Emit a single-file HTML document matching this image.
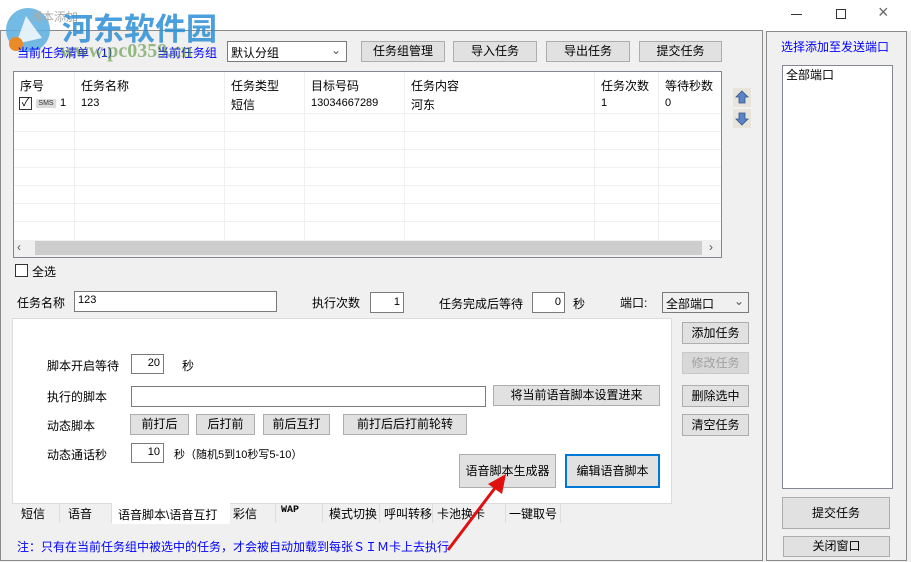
<!DOCTYPE html>
<html><head><meta charset="utf-8"><style>
*{box-sizing:border-box;margin:0;padding:0}
body{width:911px;height:562px;background:#f0f0f0;position:relative;overflow:hidden;font-family:"Liberation Sans","Noto Sans CJK SC",sans-serif;font-size:12px;color:#000}
.a{position:absolute;white-space:nowrap}
.btn{position:absolute;background:#e1e1e1;border:1px solid #adadad;text-align:center;font-size:12px}
.inp{position:absolute;background:#fff;border:1px solid #7a7a7a;font-size:11px;padding:0 3px}
.r{text-align:right}
.hl{position:absolute;height:1px;background:#f0f0f0}
.vl{position:absolute;width:1px;background:#f0f0f0}
.tab{position:absolute;top:504px;height:19px;border-right:1px solid #ddd;padding:1px 6px;white-space:nowrap}
</style></head><body>
<div class="a" style="left:0;top:0;width:911px;height:31px;background:#fff"></div>
<div class="a" style="left:0;top:30px;width:763px;height:531px;border:1px solid #8a8a8a"></div>
<div class="a" style="left:766px;top:31px;width:141px;height:530px;border:1px solid #8a8a8a"></div>
<div class="a" style="left:791px;top:14px;width:11px;height:1px;background:#333"></div>
<div class="a" style="left:836px;top:9px;width:10px;height:10px;border:1px solid #333"></div>
<div class="a" style="left:878px;top:2px;font-size:18px;color:#666">×</div>
<svg class="a" style="left:2px;top:4px" width="56" height="52"><circle cx="26" cy="26" r="22" fill="#5aaee0" opacity=".85"/><path d="M14 40 L24 12 L40 34 Z" fill="#fff" opacity=".8"/><circle cx="14" cy="40" r="7" fill="#e98b2a"/></svg>
<div class="a" style="left:30px;top:8px;color:#aaa;font-size:12px">脚本添加</div>
<div class="a" style="left:62px;top:4px;font-size:31px;font-weight:bold;color:#2c8fd6;opacity:.85">河东软件园</div>
<div class="a" style="left:17px;top:44px;color:#0000ff">当前任务清单（1）</div>
<div class="a" style="left:157px;top:44px;color:#0000ff">当前任务组</div>
<div class="a" style="left:60px;top:40px;color:#4a8a2a;opacity:.55;font-size:20px;font-weight:bold;font-family:'Liberation Serif',serif">www.pc0359.cn</div>
<div class="inp" style="left:227px;top:41px;width:120px;height:21px;font-size:12px;padding-top:2px">默认分组<span style="position:absolute;right:5px;top:1px;color:#555">⌄</span></div>
<div class="btn" style="left:361px;top:41px;width:84px;height:21px;line-height:19px">任务组管理</div>
<div class="btn" style="left:453px;top:41px;width:84px;height:21px;line-height:19px">导入任务</div>
<div class="btn" style="left:546px;top:41px;width:84px;height:21px;line-height:19px">导出任务</div>
<div class="btn" style="left:639px;top:41px;width:83px;height:21px;line-height:19px">提交任务</div>
<div class="a" style="left:13px;top:71px;width:709px;height:187px;background:#fff;border:1px solid #828790"></div>
<div class="vl" style="left:74px;top:72px;height:168px"></div>
<div class="vl" style="left:224px;top:72px;height:168px"></div>
<div class="vl" style="left:304px;top:72px;height:168px"></div>
<div class="vl" style="left:404px;top:72px;height:168px"></div>
<div class="vl" style="left:594px;top:72px;height:168px"></div>
<div class="vl" style="left:658px;top:72px;height:168px"></div>
<div class="hl" style="left:14px;top:113px;width:707px"></div>
<div class="hl" style="left:14px;top:131px;width:707px"></div>
<div class="hl" style="left:14px;top:149px;width:707px"></div>
<div class="hl" style="left:14px;top:167px;width:707px"></div>
<div class="hl" style="left:14px;top:185px;width:707px"></div>
<div class="hl" style="left:14px;top:203px;width:707px"></div>
<div class="hl" style="left:14px;top:221px;width:707px"></div>
<div class="a" style="left:20px;top:77px">序号</div>
<div class="a" style="left:81px;top:77px">任务名称</div>
<div class="a" style="left:231px;top:77px">任务类型</div>
<div class="a" style="left:311px;top:77px">目标号码</div>
<div class="a" style="left:411px;top:77px">任务内容</div>
<div class="a" style="left:601px;top:77px">任务次数</div>
<div class="a" style="left:665px;top:77px">等待秒数</div>
<div class="a" style="left:19px;top:97px;width:13px;height:13px;border:1px solid #333;font-size:11px;line-height:11px;text-align:center">✓</div>
<div class="a" style="left:36px;top:99px;width:20px;height:9px;background:#ddd;font-size:7px;line-height:9px;text-align:center;color:#333">SMS</div>
<div class="a" style="left:60px;top:97px;font-size:11px">1</div>
<div class="a" style="left:81px;top:97px;font-size:11px">123</div>
<div class="a" style="left:231px;top:96px">短信</div>
<div class="a" style="left:311px;top:97px;font-size:11px">13034667289</div>
<div class="a" style="left:411px;top:96px">河东</div>
<div class="a" style="left:601px;top:97px;font-size:11px">1</div>
<div class="a" style="left:665px;top:97px;font-size:11px">0</div>
<div class="a" style="left:14px;top:240px;width:707px;height:17px;background:#f0f0f0"></div>
<div class="a" style="left:35px;top:241px;width:667px;height:14px;background:#cdcdcd"></div>
<div class="a" style="left:17px;top:240px;color:#555">‹</div>
<div class="a" style="left:709px;top:240px;color:#555">›</div>
<div class="a" style="left:733px;top:88px;width:18px;height:19px;background:#e8e4dc"></div>
<div class="a" style="left:733px;top:109px;width:18px;height:19px;background:#e8e4dc"></div>
<svg class="a" style="left:733px;top:88px" width="18" height="40"><path d="M9 3 L15 9 L12 9 L12 15 L6 15 L6 9 L3 9 Z" fill="#5b84c4" stroke="#34558a" stroke-width=".8"/><path d="M9 37 L15 31 L12 31 L12 25 L6 25 L6 31 L3 31 Z" fill="#5b84c4" stroke="#34558a" stroke-width=".8"/></svg>
<div class="a" style="left:15px;top:264px;width:13px;height:13px;border:1px solid #333;background:#fff"></div>
<div class="a" style="left:32px;top:263px">全选</div>
<div class="a" style="left:17px;top:294px">任务名称</div>
<div class="inp" style="left:74px;top:291px;width:203px;height:21px;padding-top:2px">123</div>
<div class="a" style="left:312px;top:294px">执行次数</div>
<div class="inp r" style="left:370px;top:292px;width:34px;height:21px;padding-top:3px">1</div>
<div class="a" style="left:439px;top:295px">任务完成后等待</div>
<div class="inp r" style="left:532px;top:292px;width:33px;height:21px;padding-top:3px">0</div>
<div class="a" style="left:573px;top:295px">秒</div>
<div class="a" style="left:620px;top:294px">端口:</div>
<div class="inp" style="left:662px;top:292px;width:87px;height:21px;font-size:12px;background:#f0f0f0;padding-top:2px">全部端口<span style="position:absolute;right:4px;top:1px;color:#555">⌄</span></div>
<div class="a" style="left:12px;top:318px;width:660px;height:186px;background:#fff;border:1px solid #dcdcdc"></div>
<div class="btn" style="left:682px;top:322px;width:67px;height:22px;line-height:20px">添加任务</div>
<div class="btn" style="left:682px;top:352px;width:67px;height:22px;line-height:20px;color:#a0a0a0;background:#d8d8d8;border-color:#c8c8c8">修改任务</div>
<div class="btn" style="left:682px;top:385px;width:67px;height:22px;line-height:20px">删除选中</div>
<div class="btn" style="left:682px;top:414px;width:67px;height:22px;line-height:20px">清空任务</div>
<div class="a" style="left:47px;top:357px">脚本开启等待</div>
<div class="inp r" style="left:131px;top:354px;width:33px;height:20px;padding-top:2px">20</div>
<div class="a" style="left:182px;top:357px">秒</div>
<div class="a" style="left:47px;top:388px">执行的脚本</div>
<div class="inp" style="left:131px;top:386px;width:355px;height:21px"></div>
<div class="btn" style="left:493px;top:385px;width:167px;height:21px;line-height:19px">将当前语音脚本设置进来</div>
<div class="a" style="left:47px;top:417px">动态脚本</div>
<div class="btn" style="left:130px;top:414px;width:59px;height:21px;line-height:19px">前打后</div>
<div class="btn" style="left:196px;top:414px;width:59px;height:21px;line-height:19px">后打前</div>
<div class="btn" style="left:263px;top:414px;width:67px;height:21px;line-height:19px">前后互打</div>
<div class="btn" style="left:343px;top:414px;width:124px;height:21px;line-height:19px">前打后后打前轮转</div>
<div class="a" style="left:47px;top:446px">动态通话秒</div>
<div class="inp r" style="left:131px;top:443px;width:33px;height:20px;padding-top:2px">10</div>
<div class="a" style="left:174px;top:446px;font-size:11px">秒（随机5到10秒写5-10）</div>
<div class="btn" style="left:459px;top:454px;width:97px;height:34px;line-height:32px">语音脚本生成器</div>
<div class="btn" style="left:565px;top:454px;width:95px;height:34px;line-height:30px;border:2px solid #0078d7">编辑语音脚本</div>
<div class="tab" style="left:13px;width:47px;padding-left:8px">短信</div>
<div class="tab" style="left:60px;width:52px;padding-left:8px">语音</div>
<div class="a" style="left:112px;top:503px;width:118px;height:21px;background:#fff;padding:3px 6px">语音脚本\语音互打</div>
<div class="tab" style="left:230px;width:46px;padding-left:3px">彩信</div>
<div class="tab" style="left:276px;width:47px;padding-left:5px;font-size:10px;font-weight:bold;font-family:'Liberation Mono',monospace">WAP</div>
<div class="tab" style="left:323px;width:57px">模式切换</div>
<div class="tab" style="left:380px;width:53px;padding-left:4px">呼叫转移</div>
<div class="tab" style="left:433px;width:73px;padding-left:4px">卡池换卡</div>
<div class="tab" style="left:506px;width:55px;padding-left:3px">一键取号</div>
<div class="a" style="left:17px;top:538px;color:#0000ff;font-size:12px">注：只有在当前任务组中被选中的任务，才会被自动加载到每张ＳＩＭ卡上去执行</div>
<svg class="a" style="left:440px;top:470px" width="80" height="90"><line x1="8" y1="80" x2="58" y2="14" stroke="#e01010" stroke-width="3"/><path d="M66 4 L48 14 L62 24 Z" fill="#e01010"/></svg>
<div class="a" style="left:781px;top:38px;color:#0000ff">选择添加至发送端口</div>
<div class="a" style="left:782px;top:65px;width:111px;height:424px;background:#fff;border:1px solid #828790;padding:0 3px">全部端口</div>
<div class="btn" style="left:782px;top:497px;width:108px;height:32px;line-height:30px">提交任务</div>
<div class="btn" style="left:783px;top:536px;width:107px;height:21px;line-height:19px">关闭窗口</div>
</body></html>
